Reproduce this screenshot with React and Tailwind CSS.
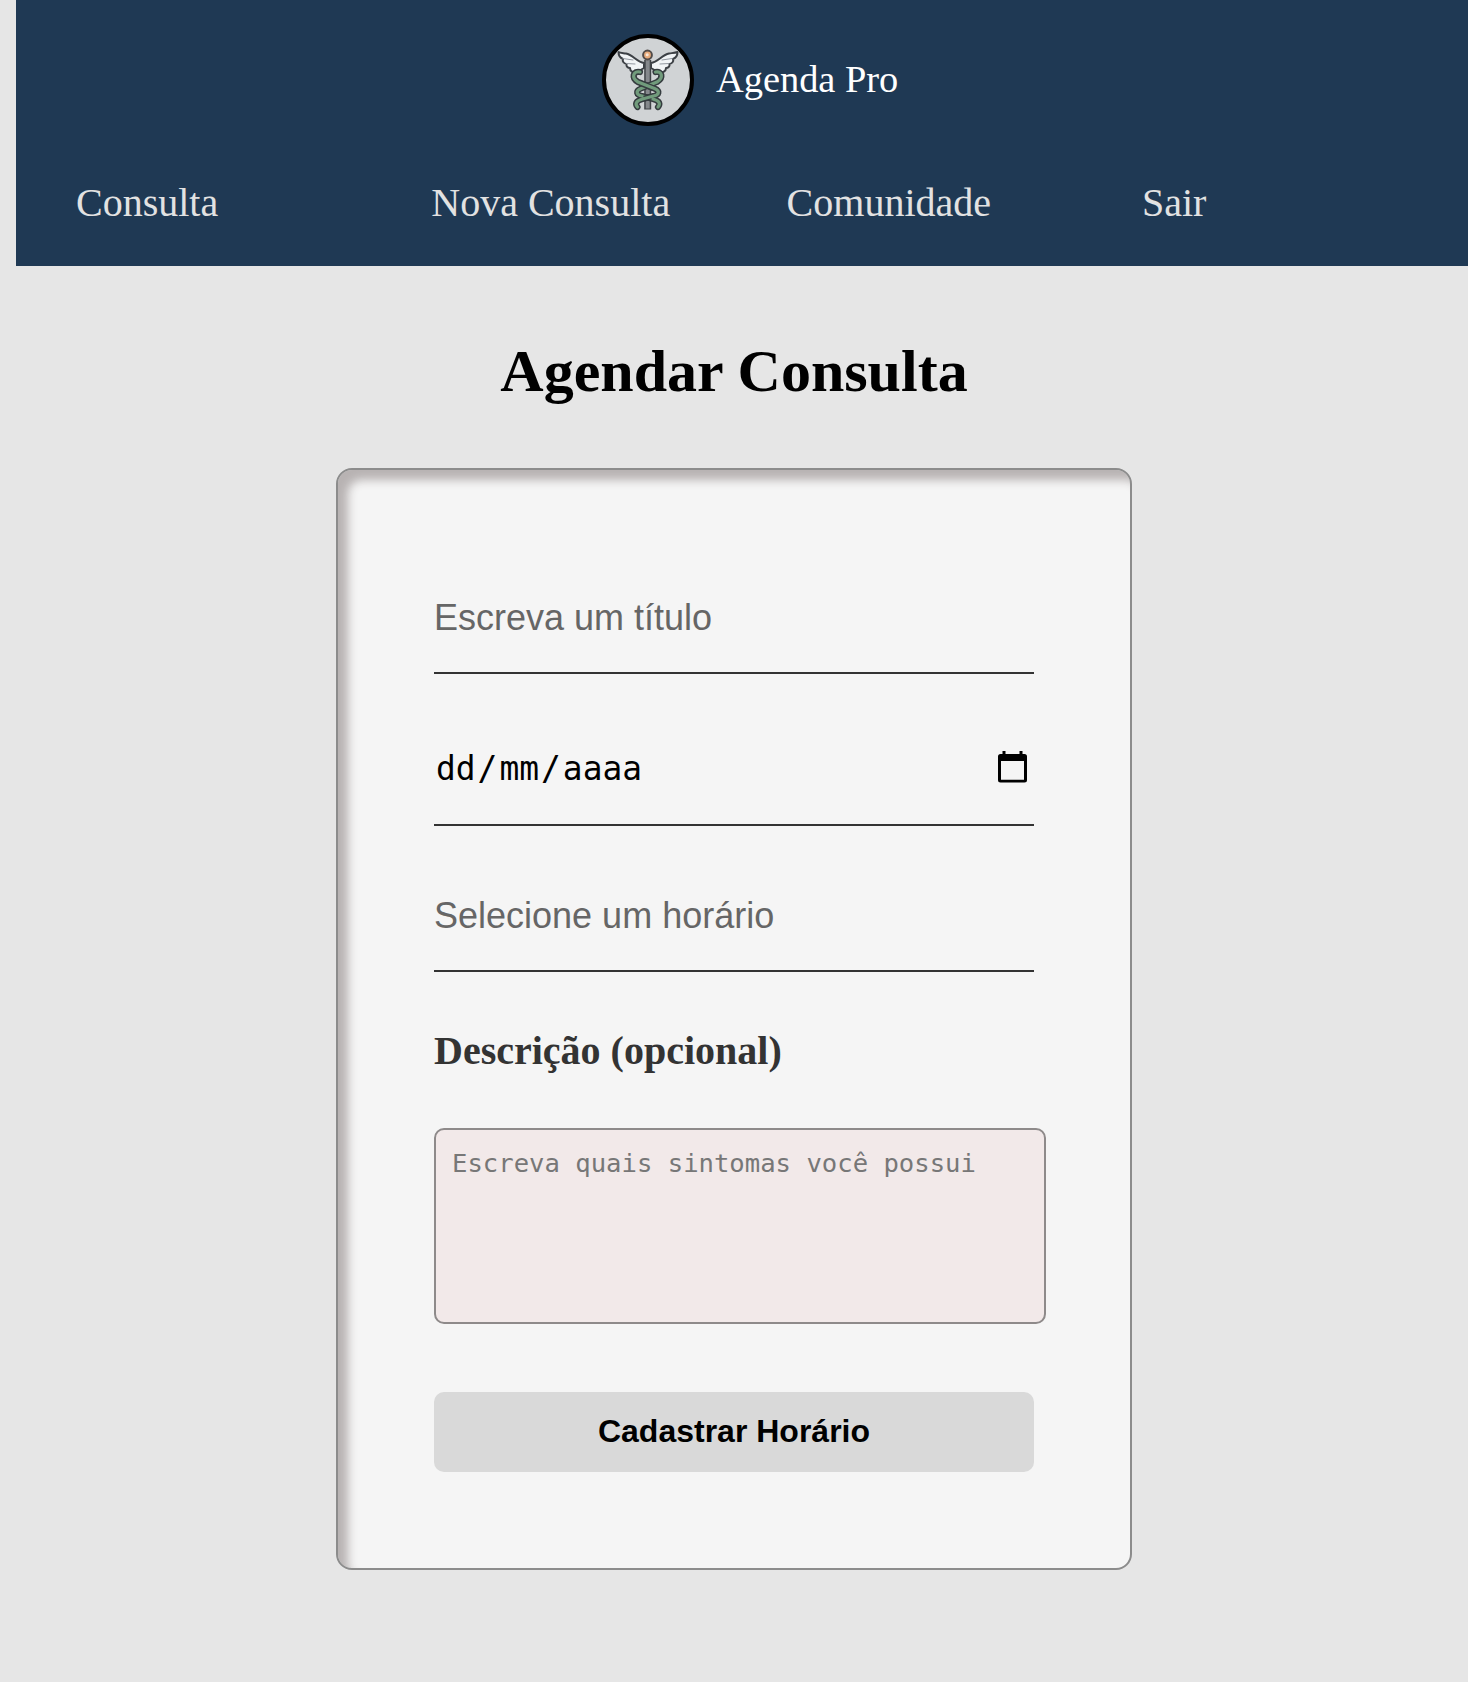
const links = ["Consulta", "Nova Consulta", "Comunidade", "Sair"];

function Caduceus() {
  return (
    <svg viewBox="0 0 84 84" className="block size-[84px]" fill="none" strokeLinecap="round" strokeLinejoin="round">
      <g fill="#f1f4f6" stroke="#3c4045" strokeWidth="2">
        <path d="M38 25C31 24 27 17 20 15.500C17 15 14 15 12.500 14C12.500 18 14.500 20 17 21C16 23.500 18 25.500 20.500 26C20 28.500 22 30 24 30C24 33 27 35.500 31 34L38 30Z" />
        <path d="M45 25C52 24 56 17 63 15.500C66 15 69 15 71.500 14C71.500 18 69.500 20 67 21C68 23.500 66 25.500 63.500 26C64 28.500 62 30 60 30C60 33 57 35.500 52 34L45 30Z" />
      </g>
      <path d="M17 20.500L27 22M20.500 25.500L29 26M66 20.500L56 22M63 25.500L54 26" stroke="#9298a0" strokeWidth="1" />
      <path d="M41.700 22V71.500" stroke="#3f4347" strokeWidth="7" strokeLinecap="butt" />
      <path d="M41.700 22V70.500" stroke="#85888c" strokeWidth="4" strokeLinecap="butt" />
      <g stroke="#353c3f" strokeWidth="6.200">
        <path d="M49.500 34C56 32.500 58 40 51 44L35 50.500C29 53 30.500 57 36 58L47 61C54 63 54.500 66 52 69" />
        <path d="M34 34C27 32.500 25 40 32 44L48.500 50.500C54.500 53 53 57 47.500 58L36.500 61C29.500 63 29 66 31.500 69" />
      </g>
      <g stroke="#719b7c" strokeWidth="3.200">
        <path d="M49.500 34C56 32.500 58 40 51 44L35 50.500C29 53 30.500 57 36 58L47 61C54 63 54.500 66 52 69" />
      </g>
      <path d="M34 45L47 50M45 58.600L38 60.600" stroke="#353c3f" strokeWidth="6" strokeLinecap="butt" />
      <path
        d="M34 34C27 32.500 25 40 32 44L48.500 50.500C54.500 53 53 57 47.500 58L36.500 61C29.500 63 29 66 31.500 69"
        stroke="#719b7c"
        strokeWidth="3.200"
      />
      <circle cx="41.500" cy="17" r="4.400" fill="#e8ab7c" stroke="#514b49" strokeWidth="2" />
      <circle cx="41.200" cy="16.800" r="1.500" fill="#f7e6d8" />
    </svg>
  );
}

function CalendarIcon() {
  return (
    <svg viewBox="0 0 29 32" className="mb-[2px] h-8 w-[29px]">
      <path
        fillRule="evenodd"
        d="M4.500 0H7.500V3H21.500V0H24.500V3H26.500Q29 3 29 5.500V29Q29 31.500 26.500 31.500H2.500Q0 31.500 0 29V5.500Q0 3 2.500 3H4.500ZM3 10V28.800H26V10Z"
        fill="#000"
      />
    </svg>
  );
}

function TextField({ placeholder }) {
  return (
    <input
      type="text"
      placeholder={placeholder}
      className="block h-[112px] w-full border-b-2 border-[#333] bg-transparent pt-[2px] font-['Liberation_Sans',Arial,sans-serif] text-[36px] outline-none placeholder:text-[#666]"
    />
  );
}

export default function App() {
  return (
    <div className="min-h-[1682px] overflow-hidden bg-[#e6e6e6] font-['Liberation_Serif','Times_New_Roman',serif] text-black">
      <header className="ml-4 h-[266px] overflow-hidden bg-[#1f3954] pt-[34px]">
        <div className="ml-[586px] flex h-[92px] items-center gap-[22px]">
          <div className="size-[92px] shrink-0 overflow-hidden rounded-full border-4 border-black bg-[#d0d3d5]">
            <Caduceus />
          </div>
          <span className="pb-[2px] text-[38.4px] leading-[44px] whitespace-nowrap text-white">Agenda Pro</span>
        </div>
        <nav className="mt-[54px] flex pl-[60px]">
          {links.map((link) => (
            <a key={link} href="#" className="w-[355.3px] shrink-0 text-[40px] leading-[46px] text-[#e2e2e2]">
              {link}
            </a>
          ))}
        </nav>
      </header>

      <main className="flex flex-col items-center">
        <h1 className="mt-[71px] text-[60px] leading-[68px] font-bold">Agendar Consulta</h1>

        <form className="mt-[63px] h-[1102px] w-[796px] rounded-2xl border-2 border-[#8c8c8c] bg-[#f5f5f5] px-24 pt-[92px] shadow-[inset_10px_10px_10px_#b8b3b3]">
          <TextField placeholder="Escreva um título" />

          <div className="mt-[38px] flex h-[114px] items-center justify-between border-b-2 border-[#333] pr-[7px] pl-[2px]">
            <div className="flex pt-[2px] font-['DejaVu_Sans_Mono',monospace] text-[32.9px] leading-[42px]">
              <span className="pr-[2px]">dd</span>
              <span>/</span>
              <span className="px-[2px]">mm</span>
              <span>/</span>
              <span className="pl-[2px]">aaaa</span>
            </div>
            <CalendarIcon />
          </div>

          <div className="mt-[34px]">
            <TextField placeholder="Selecione um horário" />
          </div>

          <label className="mt-[56px] block text-[40px] leading-[46px] font-bold text-[#333]">Descrição (opcional)</label>
          <textarea
            placeholder="Escreva quais sintomas você possui"
            className="mt-[54px] block h-[196px] w-[612px] resize-none rounded-[10px] border-2 border-[#8e8a8a] bg-[#f2e9e9] px-4 pt-[17px] font-['DejaVu_Sans_Mono',monospace] text-[25.6px] leading-8 outline-none placeholder:text-[#777]"
          />

          <button
            type="button"
            className="mt-[68px] block h-20 w-full rounded-[10px] bg-[#d9d9d9] pb-[3px] font-['Liberation_Sans',Arial,sans-serif] text-[32px] font-bold"
          >
            Cadastrar Horário
          </button>
        </form>
      </main>
    </div>
  );
}
